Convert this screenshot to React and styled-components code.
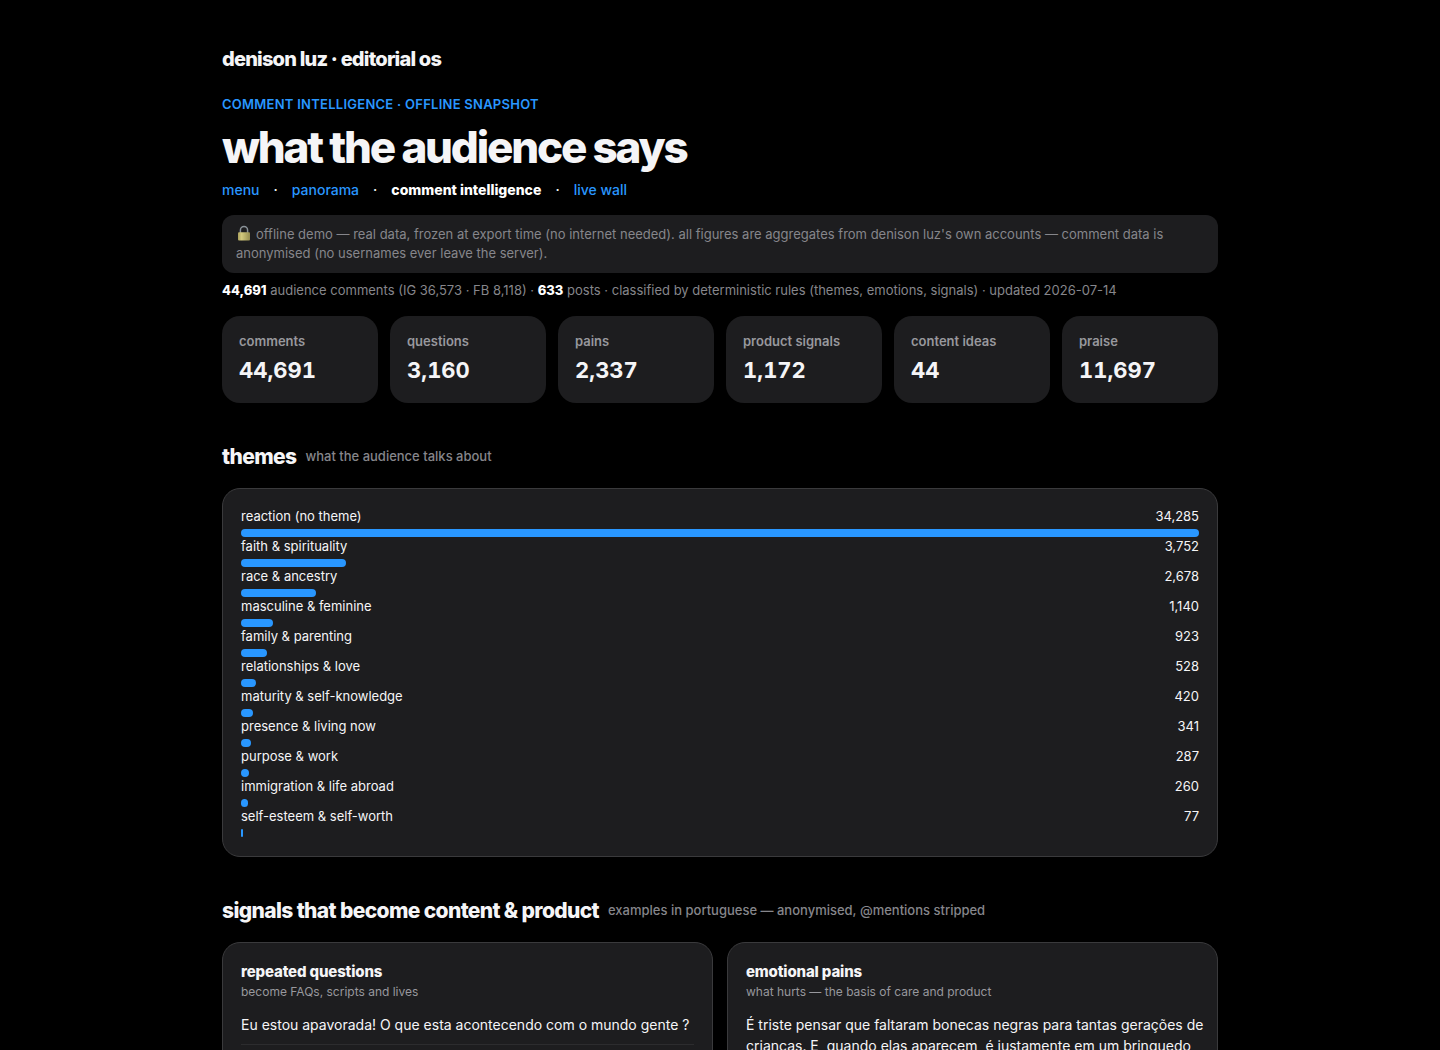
import React from "react";
import styled, { createGlobalStyle } from "styled-components";

const GlobalStyle = createGlobalStyle`
  * {
    box-sizing: border-box;
  }

  body {
    margin: 0;
    background: #000;
    color: #f5f5f7;
    font-family: Inter, "Liberation Sans", sans-serif;
    font-size: 14px;
    line-height: 21px;
  }
`;

const Page = styled.div`
  max-width: 1040px;
  margin: 0 auto;
  padding: 44px 22px;
`;

const Brand = styled.div`
  font-size: 20px;
  line-height: 30px;
  font-weight: 800;
  letter-spacing: -0.04em;
`;

const Eyebrow = styled.p`
  margin: 20px 0 0;
  font-size: 13px;
  line-height: 20px;
  font-weight: 600;
  letter-spacing: 0.02em;
  text-transform: uppercase;
  color: #2997ff;
`;

const Title = styled.h1`
  margin: 8px 0 7px;
  font-size: 44px;
  line-height: 50px;
  font-weight: 800;
  letter-spacing: -0.05em;
`;

const Nav = styled.nav`
  display: flex;
  gap: 14px;
  font-weight: 500;
`;

const NavLink = styled.a`
  color: #2997ff;
  text-decoration: none;
`;

const Current = styled.strong`
  color: #fff;
  font-weight: 800;
`;

const Notice = styled.div`
  margin-top: 15px;
  padding: 10px 14px;
  border-radius: 12px;
  background: #1d1d1f;
  color: #86868b;
  font-size: 13px;
  line-height: 19px;
`;

const LockIcon = styled.svg`
  width: 16px;
  height: 16px;
  margin-right: 4px;
  vertical-align: -2px;
`;

const Meta = styled.p`
  margin: 7px 0 0;
  color: #86868b;
  font-size: 13px;
  line-height: 20px;

  b {
    color: #fff;
    font-weight: 800;
  }
`;

const Stats = styled.div`
  display: grid;
  grid-template-columns: repeat(6, 1fr);
  gap: 12px;
  margin-top: 16px;
`;

const Stat = styled.div`
  padding: 15px 17px 16px;
  border-radius: 18px;
  background: #1d1d1f;
`;

const StatLabel = styled.div`
  color: #98989d;
  font-size: 13px;
  line-height: 20px;
  font-weight: 600;
`;

const StatValue = styled.div`
  margin-top: 2px;
  font-size: 22px;
  line-height: 34px;
  font-weight: 700;
  font-variant-numeric: tabular-nums;
`;

const Heading = styled.h2`
  display: flex;
  align-items: center;
  gap: 9px;
  margin: 38px 0 16px;
  font-size: 21px;
  line-height: 31px;
  font-weight: 800;
  letter-spacing: -0.03em;
`;

const Hint = styled.span`
  color: #86868b;
  font-size: 13px;
  font-weight: 500;
  letter-spacing: 0;
`;

const Card = styled.section`
  padding: 18px 18px 19px;
  border: 1px solid #3a3a3c;
  border-radius: 18px;
  background: #1d1d1f;
`;

const ThemeRow = styled.div`
  display: flex;
  justify-content: space-between;
  padding-bottom: 4px;
  font-size: 13px;
  line-height: 18px;
`;

const Bar = styled.div`
  height: 8px;
  border-radius: 4px;
  background: #2997ff;
`;

const Columns = styled.div`
  display: grid;
  grid-template-columns: repeat(2, minmax(0, 1fr));
  gap: 14px;
`;

const CardTitle = styled.h3`
  margin: 0;
  font-size: 15px;
  line-height: 22px;
  font-weight: 800;
  letter-spacing: -0.01em;
`;

const CardHint = styled.p`
  margin: 0 0 13px;
  color: #98989d;
  font-size: 12px;
  line-height: 18px;
`;

const Quotes = styled.ul`
  margin: 0;
  padding: 0;
  list-style: none;
`;

const Quote = styled.li`
  padding-bottom: 9px;
  border-bottom: 1px solid #2c2c2e;
  white-space: pre;
`;

const stats = [
  { label: "comments", value: 44691 },
  { label: "questions", value: 3160 },
  { label: "pains", value: 2337 },
  { label: "product signals", value: 1172 },
  { label: "content ideas", value: 44 },
  { label: "praise", value: 11697 }
];

const themes = [
  { name: "reaction (no theme)", count: 34285 },
  { name: "faith & spirituality", count: 3752 },
  { name: "race & ancestry", count: 2678 },
  { name: "masculine & feminine", count: 1140 },
  { name: "family & parenting", count: 923 },
  { name: "relationships & love", count: 528 },
  { name: "maturity & self-knowledge", count: 420 },
  { name: "presence & living now", count: 341 },
  { name: "purpose & work", count: 287 },
  { name: "immigration & life abroad", count: 260 },
  { name: "self-esteem & self-worth", count: 77 }
];

const signals = [
  {
    title: "repeated questions",
    hint: "become FAQs, scripts and lives",
    quotes: ["Eu estou apavorada! O que esta acontecendo com o mundo gente ?"]
  },
  {
    title: "emotional pains",
    hint: "what hurts — the basis of care and product",
    quotes: [
      "É triste pensar que faltaram bonecas negras para tantas gerações de\ncrianças. E, quando elas aparecem, é justamente em um brinquedo"
    ]
  }
];

const format = n => n.toLocaleString("en-US");
const max = themes[0].count;

const Lock = () => (
  <LockIcon viewBox="0 0 16 16" aria-hidden="true">
    <defs>
      <linearGradient id="brass" x1="0" x2="1">
        <stop offset="0" stopColor="#aaa05c" />
        <stop offset="0.3" stopColor="#d3ca7e" />
        <stop offset="1" stopColor="#948c50" />
      </linearGradient>
    </defs>
    <path
      d="M4.4 8V5.2a3.6 3.6 0 0 1 7.2 0V8"
      fill="none"
      stroke="#8a9298"
      strokeWidth="1.5"
    />
    <rect x="2" y="7.2" width="12" height="8.2" rx="1" fill="url(#brass)" />
  </LockIcon>
);

const App = () => (
  <>
    <GlobalStyle />
    <Page>
      <header>
        <Brand>denison luz · editorial os</Brand>
        <Eyebrow>comment intelligence · offline snapshot</Eyebrow>
        <Title>what the audience says</Title>
        <Nav>
          <NavLink href="#menu">menu</NavLink>
          <span>·</span>
          <NavLink href="#panorama">panorama</NavLink>
          <span>·</span>
          <Current>comment intelligence</Current>
          <span>·</span>
          <NavLink href="#live-wall">live wall</NavLink>
        </Nav>
      </header>
      <main>
        <Notice>
          <Lock />
          offline demo — real data, frozen at export time (no internet needed).
          all figures are aggregates from denison luz's own accounts — comment
          data is anonymised (no usernames ever leave the server).
        </Notice>
        <Meta>
          <b>44,691</b> audience comments (IG 36,573 · FB 8,118) · <b>633</b>{" "}
          posts · classified by deterministic rules (themes, emotions, signals)
          · updated 2026-07-14
        </Meta>
        <Stats>
          {stats.map(stat => (
            <Stat key={stat.label}>
              <StatLabel>{stat.label}</StatLabel>
              <StatValue>{format(stat.value)}</StatValue>
            </Stat>
          ))}
        </Stats>

        <Heading>
          themes <Hint>what the audience talks about</Hint>
        </Heading>
        <Card>
          {themes.map(theme => (
            <div key={theme.name}>
              <ThemeRow>
                <span>{theme.name}</span>
                <span>{format(theme.count)}</span>
              </ThemeRow>
              <Bar style={{ width: `${(theme.count / max) * 100}%` }} />
            </div>
          ))}
        </Card>

        <Heading>
          signals that become content &amp; product{" "}
          <Hint>examples in portuguese — anonymised, @mentions stripped</Hint>
        </Heading>
        <Columns>
          {signals.map(signal => (
            <Card key={signal.title}>
              <CardTitle>{signal.title}</CardTitle>
              <CardHint>{signal.hint}</CardHint>
              <Quotes>
                {signal.quotes.map(quote => (
                  <Quote key={quote}>{quote}</Quote>
                ))}
              </Quotes>
            </Card>
          ))}
        </Columns>
      </main>
    </Page>
  </>
);

export default App;
